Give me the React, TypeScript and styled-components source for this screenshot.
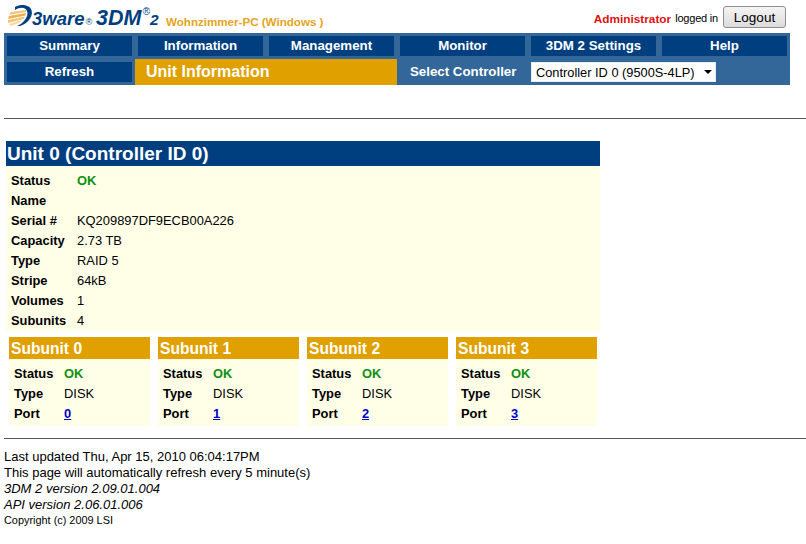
import React from 'react';
import styled, { createGlobalStyle } from 'styled-components';

const GlobalStyle = createGlobalStyle`
  html, body {
    margin: 0;
    padding: 0;
    background: #ffffff;
    font-family: "Liberation Sans", Arial, sans-serif;
    color: #000000;
  }
`;

const menuItems = ['Summary', 'Information', 'Management', 'Monitor', '3DM 2 Settings', 'Help'];

const unitRows = [
  ['Status', 'OK'],
  ['Name', ''],
  ['Serial #', 'KQ209897DF9ECB00A226'],
  ['Capacity', '2.73 TB'],
  ['Type', 'RAID 5'],
  ['Stripe', '64kB'],
  ['Volumes', '1'],
  ['Subunits', '4'],
];

const Logo = () => (
  <LogoWrap>
    <svg width="26" height="22" viewBox="0 0 26 22">
      <path d="M8 2 C13 -1 21 -1 24 4 C27 10 22 18 13 21 L10 21 C17 18 22 11 20 6 C18 2 13 2 8 5 Z" fill="#003f7f" />
      <path d="M4 7 L19 5 L19 7 L2 10 Z" fill="#f2c67c" />
      <path d="M2 11 L19 8 L18.5 10.5 L1 14 Z" fill="#eeb050" />
      <path d="M1 15 L18 11.5 L17 14 L1 18 Z" fill="#f2c67c" />
      <path d="M2 19 L15 15 L12 18 L4 21 Z" fill="#f6d8a0" />
    </svg>
    <LogoWord>3ware</LogoWord>
    <LogoMark>®</LogoMark>
    <LogoProduct>3DM</LogoProduct>
    <LogoSup>®</LogoSup>
    <LogoTwo>2</LogoTwo>
  </LogoWrap>
);

const SubunitCard = ({ index }: { index: number }) => (
  <Card>
    <CardTitle>Subunit {index}</CardTitle>
    <CardBody>
      <CardRow>
        <CardLabel>Status</CardLabel>
        <OkValue>OK</OkValue>
      </CardRow>
      <CardRow>
        <CardLabel>Type</CardLabel>
        <span>DISK</span>
      </CardRow>
      <CardRow>
        <CardLabel>Port</CardLabel>
        <PortLink href="#">{index}</PortLink>
      </CardRow>
    </CardBody>
  </Card>
);

const App = () => {
  return (
    <Page>
      <GlobalStyle />
      <Header>
        <HeaderLeft>
          <Logo />
          <HostName>Wohnzimmer-PC (Windows )</HostName>
        </HeaderLeft>
        <UserArea>
          <UserName>Administrator</UserName>
          <LoggedIn>logged in</LoggedIn>
          <LogoutButton>Logout</LogoutButton>
        </UserArea>
      </Header>

      <NavBar>
        <MenuRow>
          {menuItems.map((item) => (
            <MenuButton key={item}>{item}</MenuButton>
          ))}
        </MenuRow>
        <SubRow>
          <MenuButton>Refresh</MenuButton>
          <PageTitle>Unit Information</PageTitle>
          <SelectLabel>Select Controller</SelectLabel>
          <SelectWrap>
            <ControllerSelect defaultValue="0">
              <option value="0">Controller ID 0 (9500S-4LP)</option>
            </ControllerSelect>
            <SelectArrow />
          </SelectWrap>
        </SubRow>
      </NavBar>

      <TopRule />

      <UnitPanel>
        <UnitTitle>Unit 0 (Controller ID 0)</UnitTitle>
        <UnitBody>
          {unitRows.map(([label, value]) => (
            <UnitRow key={label}>
              <UnitLabel>{label}</UnitLabel>
              {value === 'OK' ? <OkValue>{value}</OkValue> : <span>{value}</span>}
            </UnitRow>
          ))}
        </UnitBody>
        <CardGrid>
          {[0, 1, 2, 3].map((i) => (
            <SubunitCard key={i} index={i} />
          ))}
        </CardGrid>
      </UnitPanel>

      <BottomRule />

      <Footer>
        <div>Last updated Thu, Apr 15, 2010 06:04:17PM</div>
        <div>This page will automatically refresh every 5 minute(s)</div>
        <em>3DM 2 version 2.09.01.004</em>
        <em>API version 2.06.01.006</em>
        <Copyright>Copyright (c) 2009 LSI</Copyright>
      </Footer>
    </Page>
  );
};

export default App;

const Page = styled.div`
  width: 806px;
  height: 544px;
  overflow: hidden;
`;

const Header = styled.div`
  display: flex;
  justify-content: space-between;
  height: 33px;
  width: 786px;
  margin-left: 4px;
`;

const HeaderLeft = styled.div`
  display: flex;
  align-items: flex-end;
  padding-left: 3px;
  padding-bottom: 5px;
`;

const LogoWrap = styled.div`
  display: flex;
  align-items: baseline;
  align-self: flex-start;
  width: 159px;
  margin-top: 6px;
  color: #003f7f;
  font-style: italic;
  font-weight: 700;

  svg {
    align-self: flex-start;
    flex: none;
    margin-top: -1px;
  }
`;

const LogoWord = styled.span`
  font-size: 18.5px;
  margin-left: -1px;
`;

const LogoMark = styled.span`
  font-size: 9px;
  font-weight: 400;
  margin-left: 1px;
`;

const LogoProduct = styled.span`
  font-size: 21.5px;
  margin-left: 4px;
`;

const LogoSup = styled.span`
  font-size: 10px;
  font-weight: 400;
  align-self: flex-start;
  margin-left: 1px;
`;

const LogoTwo = styled.span`
  font-size: 15.5px;
`;

const HostName = styled.span`
  font-size: 11.6px;
  font-weight: 700;
  color: #e6a422;
`;

const UserArea = styled.div`
  display: flex;
  align-items: flex-start;
  margin-right: 4px;
  padding-top: 6px;
`;

const UserName = styled.span`
  font-size: 11.8px;
  font-weight: 700;
  color: #e01010;
  margin-top: 6px;
`;

const LoggedIn = styled.span`
  font-size: 11px;
  margin: 6px 5px 0 4px;
  letter-spacing: -0.2px;
`;

const LogoutButton = styled.button`
  width: 63px;
  height: 22px;
  padding: 0;
  border: 1px solid #8e8e8e;
  border-radius: 3px;
  background: linear-gradient(#f4f4f4, #dcdcdc);
  font: 13.5px "Liberation Sans", Arial, sans-serif;
  color: #000000;
`;

const NavBar = styled.div`
  width: 786px;
  height: 52px;
  margin-left: 4px;
  background: #336699;
`;

const MenuRow = styled.div`
  display: flex;
  gap: 6px;
  padding: 3px 3px 0;
`;

const MenuButton = styled.div`
  flex: none;
  width: 125px;
  height: 20px;
  background: #003f7f;
  color: #ffffff;
  font-size: 13.3px;
  font-weight: 700;
  line-height: 19px;
  text-align: center;
`;

const SubRow = styled.div`
  display: flex;
  align-items: center;
  height: 29px;
  padding: 3px 0 0 3px;
  box-sizing: border-box;
`;

const PageTitle = styled.div`
  flex: none;
  width: 251px;
  height: 26px;
  margin-left: 3px;
  padding-left: 11px;
  background: #e0a000;
  color: #ffffff;
  font-size: 16px;
  font-weight: 700;
  line-height: 25px;
`;

const SelectLabel = styled.div`
  flex: none;
  width: 121px;
  margin-left: 13px;
  color: #ffffff;
  font-size: 13.3px;
  font-weight: 700;
  line-height: 19px;
  align-self: flex-start;
  margin-top: 3px;
`;

const SelectWrap = styled.div`
  position: relative;
  width: 185px;
  height: 20px;
`;

const ControllerSelect = styled.select`
  appearance: none;
  display: block;
  width: 100%;
  height: 100%;
  padding: 0 0 0 4px;
  border: 1px solid #e8eef4;
  border-radius: 0;
  background: #ffffff;
  font: 12.8px "Liberation Sans", Arial, sans-serif;
  color: #000000;
`;

const SelectArrow = styled.span`
  position: absolute;
  right: 4px;
  top: 8px;
  width: 0;
  height: 0;
  border-left: 4px solid transparent;
  border-right: 4px solid transparent;
  border-top: 4px solid #000000;
  pointer-events: none;
`;

const TopRule = styled.div`
  height: 1px;
  margin: 33px 0 0 4px;
  background: #555555;
`;

const UnitPanel = styled.div`
  width: 594px;
  margin: 22px 0 0 6px;
`;

const UnitTitle = styled.div`
  height: 25px;
  padding-left: 1px;
  background: #003f7f;
  color: #ffffff;
  font-size: 19px;
  font-weight: 700;
  line-height: 26px;
`;

const UnitBody = styled.div`
  height: 165px;
  background: #ffffe8;
  font-size: 12.9px;
  box-sizing: border-box;
  padding-top: 4px;
`;

const UnitRow = styled.div`
  display: flex;
  height: 20px;
  align-items: center;
  padding-left: 5px;
`;

const UnitLabel = styled.span`
  width: 66px;
  font-weight: 700;
  flex: none;
`;

const OkValue = styled.span`
  color: #109010;
  font-weight: 700;
`;

const CardGrid = styled.div`
  display: flex;
  gap: 8px;
  margin: 6px 0 0 3px;
`;

const Card = styled.div`
  width: 141px;
  height: 89px;
  background: #ffffe8;
`;

const CardTitle = styled.div`
  height: 22px;
  padding-left: 2px;
  background: #e0a000;
  color: #ffffff;
  font-size: 15.6px;
  font-weight: 700;
  line-height: 23px;
`;

const CardBody = styled.div`
  padding-top: 4px;
  font-size: 12.9px;
`;

const CardRow = styled.div`
  display: flex;
  align-items: center;
  height: 20px;
  padding-left: 5px;
`;

const CardLabel = styled.span`
  flex: none;
  width: 50px;
  font-weight: 700;
`;

const PortLink = styled.a`
  color: #0000cc;
  font-weight: 700;
  text-decoration: underline;
`;

const BottomRule = styled.div`
  height: 1px;
  margin: 12px 0 0 4px;
  background: #555555;
`;

const Footer = styled.div`
  display: flex;
  flex-direction: column;
  margin: 10px 0 0 4px;
  font-size: 13px;
  line-height: 16px;
`;

const Copyright = styled.div`
  font-size: 10.9px;
  line-height: 14px;
`;
